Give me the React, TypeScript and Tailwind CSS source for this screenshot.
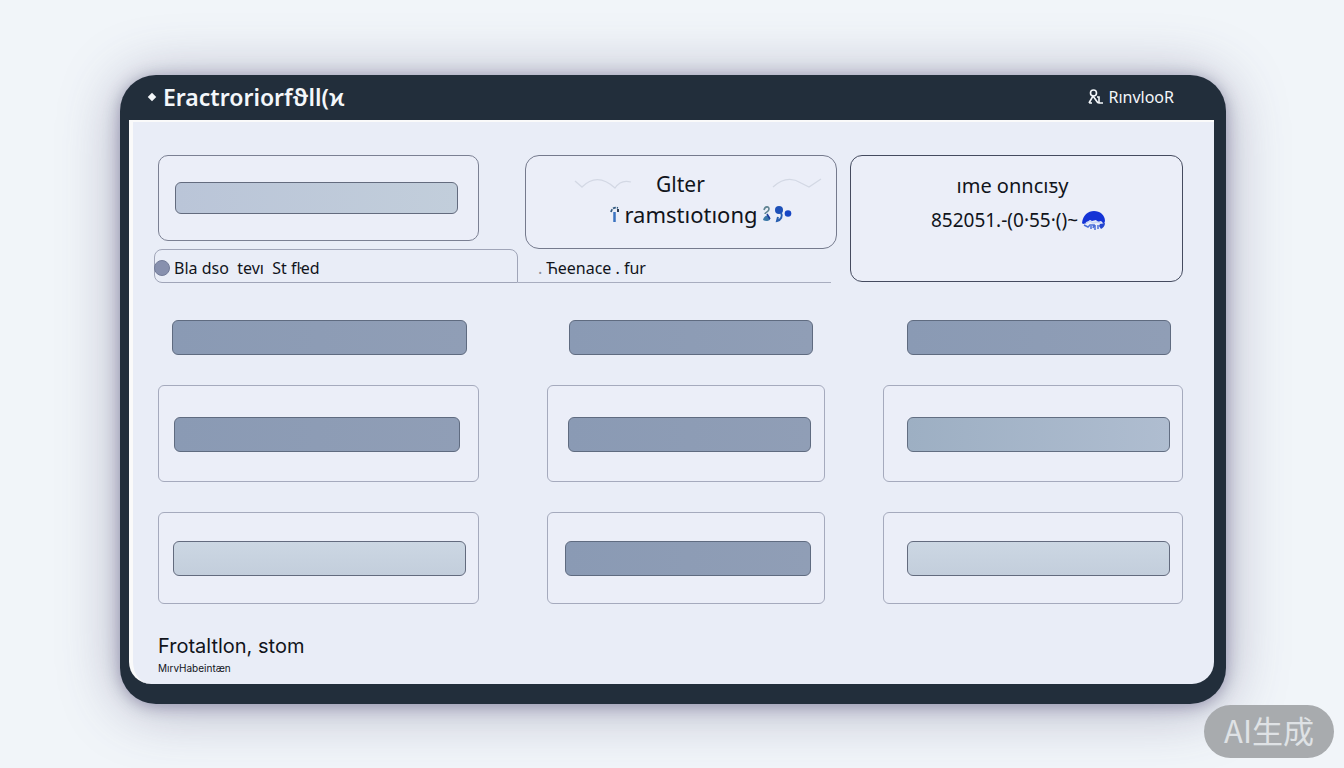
import React from "react";
import clsx from "clsx";

type Tone = "dark" | "mid" | "light" | "steel";

const tones: Record<Tone, string> = {
  dark: "border-[#5f6b80] bg-linear-to-r from-[#8a9ab4] to-[#909eb6]",
  mid: "border-[#626e82] bg-linear-to-r from-[#9dafc3] to-[#afbdd0]",
  light: "border-[#636b7e] bg-linear-to-b from-[#ccd7e3] to-[#c3cedc]",
  steel: "border-[#636b7e] bg-linear-to-r from-[#bac5d8] to-[#c2cedb]",
};

function Bar({ tone, className }: { tone: Tone; className?: string }) {
  return <div className={clsx("rounded-md border", tones[tone], className ?? "h-[35px]")} />;
}

function Panel({ className, children }: { className: string; children: React.ReactNode }) {
  return (
    <div className={clsx("flex flex-col justify-center rounded-md border border-[#a5aabd] bg-[#ebeef8]", className)}>
      {children}
    </div>
  );
}

function Wave() {
  return (
    <svg width="58" height="14" viewBox="0 0 58 14" fill="none" stroke="#d3d8e4" strokeWidth="1.3" aria-hidden="true">
      <path d="M1 4l7 6C18 0 29 0 41 11c4-6 9-8 16-6M36 7l5 4" />
    </svg>
  );
}

function WaveFlat() {
  return (
    <svg width="50" height="12" viewBox="0 0 50 12" fill="none" stroke="#d3d8e4" strokeWidth="1.3" aria-hidden="true">
      <path d="M1 9C12-1 21 0 29 5l8 4 12-8" />
    </svg>
  );
}

function Person() {
  return (
    <svg width="16" height="16" viewBox="0 0 16 16" fill="none" stroke="#f4f7fa" strokeWidth="1.6" aria-hidden="true">
      <circle cx="5.5" cy="4" r="3" />
      <path d="M1 14l4-7 5 7M9 8h2v6h4M1 14h3" />
    </svg>
  );
}

function Spark() {
  return (
    <svg width="10" height="17" viewBox="0 0 10 17" fill="none" aria-hidden="true">
      <path d="M1 6c1-4 4-5 7-4" stroke="#31597f" strokeWidth="1.8" strokeDasharray="3 1" />
      <path d="M4.500 6v10" stroke="#3a72c0" strokeWidth="2.500" />
      <path d="M8 3v3" stroke="#2a3c52" strokeWidth="2" />
    </svg>
  );
}

function Dots() {
  return (
    <svg width="30" height="18" viewBox="0 0 30 18" fill="none" aria-hidden="true">
      <path d="M2 5c1-4 5-4 5-1s-4 3-4 5" stroke="#5f8392" strokeWidth="1.6" />
      <path d="M1 15c1-5 6-6 7-2 1 3-4 4-7 2z" fill="#3c78a8" />
      <path d="M5 9l3 5" stroke="#1d3d9b" strokeWidth="1.5" />
      <circle cx="17" cy="5" r="4" fill="#1d50b8" />
      <circle cx="26" cy="8.500" r="3.300" fill="#1746c4" />
      <path d="M19 8c2 3 0 7-4 8l1-4" stroke="#285fb0" strokeWidth="2" />
    </svg>
  );
}

function Globe() {
  return (
    <svg width="24" height="20" viewBox="0 0 24 20" aria-hidden="true">
      <path d="M0 12C1 4 6 0 12 0s11 4 11 10l-1 3-3-3-3 1-2-2-4 1-2-1-3 3-4 1z" fill="#1433d6" />
      <path d="M4 12l4-2 3 2 4-1 4 1" stroke="#c9d6f6" strokeWidth="1.500" fill="none" />
      <path d="M18 13l5-1c0 3-2 5-4 6l-2-3z" fill="#2446cf" />
      <path d="M2 14l4 2 2-2h4l-1 3M9 15v3M13 14v5M16 14v4" stroke="#4a6ed8" strokeWidth="1.500" fill="none" />
    </svg>
  );
}

export default function App() {
  return (
    <div className="relative min-h-screen bg-[#f1f5f9] pt-[75px] pr-[118px] pb-16 pl-[120px] font-['Noto_Sans','Noto_Sans_CJK_SC',sans-serif] text-[#11141b]">
      <div className="rounded-[36px] bg-[#222e3b] pr-3 pb-5 pl-[9px] shadow-[0_2px_16px_rgba(62,58,100,0.4),0_4px_60px_rgba(70,66,110,0.4)]">
        <header className="flex h-[45px] items-center justify-between pr-10 pb-0.5 pl-5 text-[#f4f7fa]">
          <h1 className="flex items-center gap-2 text-[23px] leading-7 font-semibold">
            <span className="size-1.5 rotate-45 bg-[#f4f7fa]" />
            Eractroriorfϑll(ϰ
          </h1>
          <a href="#" className="flex items-center gap-1 text-base leading-6">
            <Person />
            RınvlooR
          </a>
        </header>

        <main className="rounded-b-[22px] border-t-2 border-l-4 border-[#fafafa] bg-[#e9edf7] pt-[33px] pr-[31px] pb-2.5 pl-[21px]">
          <section className="grid grid-cols-[minmax(0,683fr)_minmax(0,333fr)] gap-[13px]">
            <div>
              <div className="grid grid-cols-[minmax(0,321fr)_minmax(0,312fr)] items-start gap-[46px] pl-1">
                <div className="flex h-[86px] items-center rounded-[10px] border border-[#7b8093] bg-[#ebeef8] pr-5 pl-4">
                  <Bar tone="steel" className="h-8 w-full" />
                </div>
                <div className="flex h-[94px] flex-col items-center rounded-[14px] border border-[#757a8d] bg-[#ebeef8] pt-3">
                  <div className="flex w-full items-center justify-between pr-3.5 pl-12 text-[21px] leading-8">
                    <div className="flex items-center gap-6">
                      <Wave />
                      <span>Glter</span>
                    </div>
                    <WaveFlat />
                  </div>
                  <div className="flex items-center gap-1 pl-10 text-[22px] leading-7">
                    <Spark />
                    <span>ramstıotıong</span>
                    <Dots />
                  </div>
                </div>
              </div>
              <nav className="grid h-[33px] grid-cols-[minmax(0,364fr)_minmax(0,319fr)] text-base leading-7">
                <button className="flex items-center gap-1 rounded-t-lg rounded-bl-lg border border-[#a0a5b8] pt-1 text-left whitespace-pre">
                  <span className="-ml-px size-4 rounded-full border border-[#737c99] bg-[#8790ae]" />
                  Bla dso  tevı  St fŀed
                </button>
                <button className="mr-1.5 flex items-center gap-1 border-b border-[#a8adbf] pt-1 pl-5 text-left">
                  <span className="text-[#8b909c]">.</span>
                  Ћeenace . fur
                </button>
              </nav>
            </div>
            <div className="flex flex-col items-center rounded-[12px] border border-[#454b5f] bg-[#ebeef8] pt-3 text-xl leading-[35px]">
              <span className="pr-2">ıme onncıƽy</span>
              <span className="flex items-center gap-1 pl-1 text-[19px]">
                852051.-(0·55·()~
                <Globe />
              </span>
            </div>
          </section>

          <section className="mt-[38px] ml-1 grid grid-cols-[331fr_278fr_300fr] gap-x-[58px]">
            <div className="mr-2.5 pr-3 pl-3.5"><Bar tone="dark" /></div>
            <div className="pr-3 pl-[22px]"><Bar tone="dark" /></div>
            <div className="pr-3 pl-6"><Bar tone="dark" /></div>

            <Panel className="mt-[30px] mr-2.5 h-[97px] pt-px pr-[18px] pl-[15px]"><Bar tone="dark" /></Panel>
            <Panel className="mt-[30px] h-[97px] pt-px pr-[13px] pl-5"><Bar tone="dark" /></Panel>
            <Panel className="mt-[30px] h-[97px] pt-px pr-3 pl-[23px]"><Bar tone="mid" /></Panel>

            <Panel className="mt-[30px] mr-2.5 h-[92px] pr-3 pl-3.5"><Bar tone="light" /></Panel>
            <Panel className="mt-[30px] h-[92px] pr-[13px] pl-[17px]"><Bar tone="dark" /></Panel>
            <Panel className="mt-[30px] h-[92px] pr-3 pl-[23px]"><Bar tone="light" /></Panel>
          </section>

          <footer className="mt-[26px] ml-1 font-['Inter','Noto_Sans',sans-serif]">
            <p className="text-xl leading-8">Frotaltlon, stom</p>
            <p className="text-[10px] leading-3">MırvHabeintæn</p>
          </footer>
        </main>
      </div>

      <div className="absolute right-2.5 bottom-2.5 flex h-[53px] items-center rounded-full bg-[#a8abae] px-5 pb-1 font-['Noto_Sans_CJK_SC',sans-serif] text-[31px] leading-10 text-[#dfe2e5]">
        AI生成
      </div>
    </div>
  );
}
